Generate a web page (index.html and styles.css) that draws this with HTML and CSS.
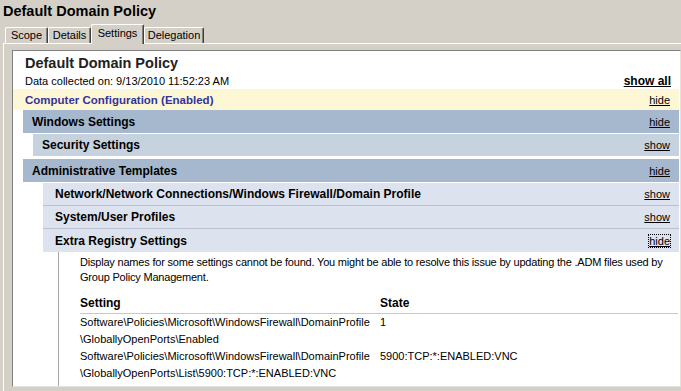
FILE: index.html
```html
<!DOCTYPE html>
<html>
<head>
<meta charset="utf-8">
<link rel="stylesheet" href="styles.css">
</head>
<body>
<div class="title">Default Domain Policy</div>
<div class="tabs">
  <div class="tab t-scope">Scope</div>
  <div class="tab t-details">Details</div>
  <div class="tab t-settings active">Settings</div>
  <div class="tab t-deleg">Delegation</div>
</div>
<div class="panel">
  <div class="report">
    <div class="rhead">Default Domain Policy</div>
    <div class="collected"><span>Data collected on: 9/13/2010 11:52:23 AM</span><a class="showall">show all</a></div>
    <div class="row he0"><span>Computer Configuration (Enabled)</span><a>hide</a></div>
    <div class="lvl1">
      <div class="row he1"><span>Windows Settings</span><a>hide</a></div>
      <div class="lvl2">
        <div class="row he2"><span>Security Settings</span><a>show</a></div>
      </div>
      <div class="row he1 admin"><span>Administrative Templates</span><a>hide</a></div>
      <div class="lvl3">
        <div class="row he3"><span>Network/Network Connections/Windows Firewall/Domain Profile</span><a>show</a></div>
        <div class="row he3"><span>System/User Profiles</span><a>show</a></div>
        <div class="row he3 last"><span>Extra Registry Settings</span><a class="focus">hide</a></div>
        <div class="body">
          <p class="note">Display names for some settings cannot be found. You might be able to resolve this issue by updating the .ADM files used by<br>Group Policy Management.</p>
          <table class="info">
            <thead>
              <tr><th class="c1">Setting</th><th>State</th></tr>
            </thead>
            <tbody>
              <tr><td class="c1">Software\Policies\Microsoft\WindowsFirewall\DomainProfile<br>\GloballyOpenPorts\Enabled</td><td>1</td></tr>
              <tr><td class="c1">Software\Policies\Microsoft\WindowsFirewall\DomainProfile<br>\GloballyOpenPorts\List\5900:TCP:*:ENABLED:VNC</td><td>5900:TCP:*:ENABLED:VNC</td></tr>
            </tbody>
          </table>
        </div>
      </div>
    </div>
  </div>
</div>
</body>
</html>
```

FILE: styles.css
```css
html, body {
  margin: 0;
  padding: 0;
}
body {
  width: 681px;
  height: 391px;
  overflow: hidden;
  background: #d4d0c8;
  font-family: "Liberation Sans", Arial, sans-serif;
  font-size: 11px;
  color: #000;
}
.title {
  height: 22px;
  line-height: 22px;
  padding-left: 3px;
  font-size: 14.5px;
  font-weight: bold;
}
.tabs {
  display: flex;
  align-items: flex-end;
  height: 21px;
  padding-left: 5px;
}
.tab {
  box-sizing: border-box;
  height: 16px;
  line-height: 14px;
  text-align: center;
  border-top: 1px solid #fff;
  border-left: 1px solid #fff;
  border-right: 1px solid #404040;
  box-shadow: inset -1px 0 0 #808080;
  border-radius: 2px 2px 0 0;
}
.t-scope { width: 43px; }
.t-details { width: 43px; }
.t-settings { width: 53px; }
.t-deleg { width: 60px; }
.tab.active {
  height: 20px;
  line-height: 16px;
  margin-bottom: -1px;
  position: relative;
  z-index: 1;
  background: #d4d0c8;
}
.panel {
  margin-left: 3px;
  border-top: 1px solid #fff;
  border-left: 1px solid #fff;
  padding: 6px 0 0 8px;
  height: 347px;
}
.report {
  background: #fff;
  border-top: 1px solid #808080;
  border-left: 1px solid #808080;
  border-right: 1px solid #e4e2dc;
  border-bottom: 1px solid #e4e2dc;
  height: 332px;
  padding-top: 3px;
  overflow: hidden;
}
.rhead {
  font-size: 14.5px;
  font-weight: bold;
  color: #222;
  line-height: 18px;
  padding-left: 12px;
}
.collected {
  display: flex;
  justify-content: space-between;
  align-items: flex-end;
  padding: 0 9px 0 12px;
  margin-top: 1px;
  line-height: 16px;
}
.showall {
  font-weight: bold;
  font-size: 12px;
  text-decoration: underline;
}
a {
  text-decoration: underline;
  color: #000;
}
.row {
  display: flex;
  justify-content: space-between;
  align-items: center;
  height: 22px;
  font-weight: bold;
  font-size: 12px;
  padding: 0 9px 0 10px;
  margin-right: 1px;
}
.row a {
  font-weight: normal;
  font-size: 11px;
}
.he0 {
  background: #fef7d6;
  color: #333399;
  height: 21px;
  font-size: 11.5px;
  padding-left: 12px;
}
.he0 a { color: #000; }
.lvl1 {
  margin-left: 10px;
}
.he1 {
  background: #a5b8ce;
  height: 23px;
  padding-left: 9px;
}
.lvl2 {
  margin-left: 10px;
  padding-top: 1px;
}
.he2 {
  background: #c7d2df;
  height: 22px;
  padding-left: 9px;
}
.admin {
  margin-top: 3px;
}
.lvl3 {
  margin-left: 20px;
  padding-top: 1px;
}
.he3 {
  background: #dde3ee;
  height: 22px;
  padding-left: 12px;
  border-bottom: 1px solid #b8c1cf;
}
.he3.last {
  border-bottom: none;
  height: 23px;
}
.focus {
  outline: 1px dotted #000;
}
.body {
  margin-left: 15px;
  border-left: 1px solid #a8a8a8;
  padding: 3px 0 0 21px;
  height: 140px;
}
.note {
  margin: 0;
  line-height: 15px;
  white-space: nowrap;
  letter-spacing: -0.2px;
}
.info {
  border-collapse: collapse;
  margin-top: 11px;
  width: 598px;
}
.info th {
  text-align: left;
  font-weight: bold;
  font-size: 12px;
  line-height: 15px;
  padding: 0 0 2px 0;
  border-bottom: 1px solid #c8c8c8;
}
.info td {
  line-height: 17px;
  padding: 0;
  vertical-align: top;
}
.info .c1 {
  width: 300px;
}
```
